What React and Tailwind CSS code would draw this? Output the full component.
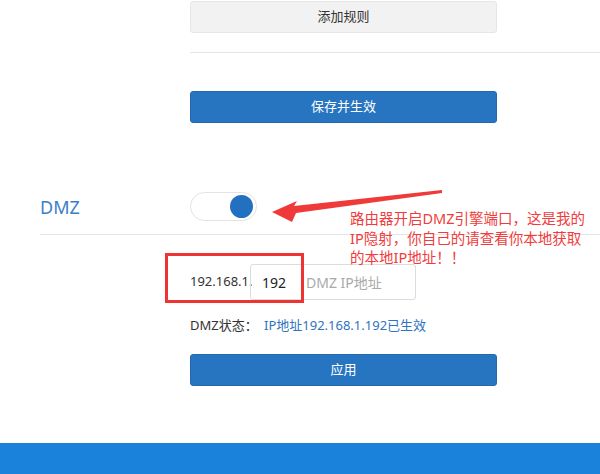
const font = { fontFamily: '"Noto Sans", "Noto Sans CJK SC", sans-serif' }

const Toggle = () => (
  <div className="w-[67px] h-[29px] rounded-full border border-[#e3e3e3] bg-white flex items-center justify-end pr-[3px]">
    <div className="w-[23px] h-[23px] rounded-full bg-[#2470c0]" />
  </div>
)

const Arrow = () => (
  <svg className="absolute left-0 top-0" width="600" height="474" viewBox="0 0 600 474">
    <polygon
      points="272,212 297,201 294,206 442,190 442,193 296,213 292,222"
      fill="#f03a3a"
    />
  </svg>
)

export default function App() {
  return (
    <div className="relative w-[600px] h-[474px] bg-white flex flex-col overflow-hidden text-[13px] text-[#333]" style={font}>
      <div className="pl-[190px] pt-[1px]">
        <button className="w-[307px] h-[32px] rounded-[3px] bg-[#f2f2f2] border border-[#e6e6e6] text-[#333]">
          添加规则
        </button>
        <div className="mt-[19px] h-px bg-[#e5e5e5]" />
        <button className="mt-[38px] w-[307px] h-[32px] rounded-[3px] bg-[#2775c1] border border-[#2468ad] text-white">
          保存并生效
        </button>
      </div>

      <div className="mt-[69px] pl-[40px] flex items-center">
        <span className="w-[150px] text-[18px] text-[#3b7ec8] leading-none">DMZ</span>
        <Toggle />
      </div>
      <div className="mt-[13px] ml-[40px] h-px bg-[#e5e5e5]" />

      <div className="mt-[29px] pl-[190px] flex items-center">
        <span className="w-[60px]">192.168.1.</span>
        <div className="w-[166px] h-[36px] rounded-[3px] border border-[#dcdcdc] flex items-center">
          <span className="w-[55px] pl-[11px] text-[14px] text-[#222]">192</span>
          <span className="text-[#aaa] text-[14px]">DMZ IP地址</span>
        </div>
      </div>

      <div className="mt-[16px] pl-[190px] flex">
        <span className="w-[74px]">DMZ状态：</span>
        <span className="text-[#2f74c0]">IP地址192.168.1.192已生效</span>
      </div>

      <div className="pl-[190px] mt-[18px]">
        <button className="w-[307px] h-[32px] rounded-[3px] bg-[#2775c1] border border-[#2468ad] text-white">
          应用
        </button>
      </div>

      <div className="mt-auto h-[31px] bg-[#1a82da]" />

      <div className="absolute left-[165px] top-[253px] w-[139px] h-[50px] border-[3px] border-[#ee3333]" />
      <Arrow />
      <div className="absolute left-[350px] top-[209px] text-[14.5px] leading-[19.5px] text-[#f03c3c] whitespace-nowrap">
        路由器开启DMZ引擎端口，这是我的
        <br />
        IP隐射，你自己的请查看你本地获取
        <br />
        的本地IP地址！！
      </div>
    </div>
  )
}
